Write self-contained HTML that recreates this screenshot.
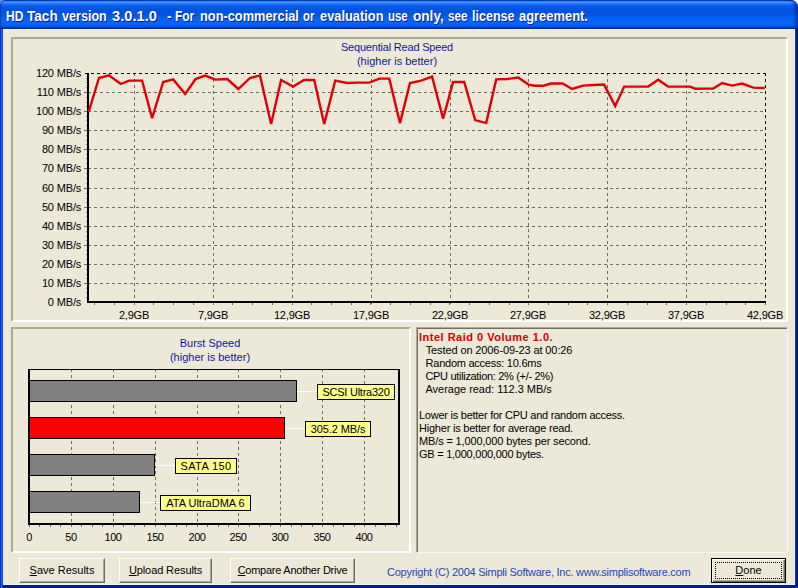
<!DOCTYPE html>
<html><head><meta charset="utf-8"><style>
*{margin:0;padding:0;box-sizing:border-box}
html,body{width:798px;height:588px;overflow:hidden;background:linear-gradient(to right,#5a8af0 50%,#f4f7fd 50%);font-family:'Liberation Sans', sans-serif}
#win{position:absolute;left:0;top:0;width:798px;height:588px;background:#081e8c;border-radius:6px 7px 0 0;overflow:hidden}
#bl{position:absolute;left:0;top:29px;width:3px;height:559px;background:linear-gradient(to right,#0030d8 0,#0030d8 1px,#2a5fe8 1px,#2a5fe8 2px,#1a48b0 2px)}
#br{position:absolute;left:795px;top:29px;width:3px;height:556px;background:linear-gradient(to right,#1a3aa8 0,#1a3aa8 1px,#001a80 1px)}
#title{position:absolute;left:0;top:0;width:798px;height:29px;border-radius:6px 7px 0 0;box-shadow:inset -3px 0 3px rgba(0,10,90,0.45),inset 1px 0 1px rgba(0,10,90,0.35);
background:linear-gradient(to bottom,#0842c2 0,#0842c2 1px,#3d90ff 1px,#3a8cff 3px,#1a6ef5 4px,#0a5ced 6px,#0053e0 9px,#0054e2 14px,#0462f4 19px,#0664f8 25px,#0450dc 27px,#0a37b0 28px,#0a2c98 29px)}
#title span{position:absolute;top:8px;font:bold 14px 'Liberation Sans', sans-serif;color:#fff;text-shadow:1px 1px 0 #0a1a8a;white-space:pre;transform-origin:0 0}
#client{position:absolute;left:3px;top:29px;width:792px;height:556px;background:#ece9d8;border-left:1px solid #dff4ff;border-top:1px solid #e8f4fe;border-right:1px solid #dff4ff;border-bottom:1px solid #eaf6ff}
.panel{position:absolute;border-top:2px solid #aca899;border-left:2px solid #aca899;border-right:2px solid #fff;border-bottom:2px solid #fff}
svg{position:absolute;left:0;top:0}
.t{font:11px 'Liberation Sans', sans-serif;fill:#000}
.tb{font:11px 'Liberation Sans', sans-serif;fill:#14149a}
.tl{font:11px 'Liberation Sans', sans-serif;fill:#000}
.btn{position:absolute;height:25px;background:#ece9d8;border:1px solid;border-color:#fff #716f64 #716f64 #fff;box-shadow:inset -1px -1px 0 #aca899;font:11px 'Liberation Sans', sans-serif;color:#000;text-align:center;line-height:23px}
.btn u{text-decoration:underline}
#memo{position:absolute;left:416px;top:327px;width:372px;height:226px;border-top:1px solid #aca899;border-left:1px solid #aca899;border-right:1px solid #f8f8f0;border-bottom:1px solid #f8f8f0;box-shadow:inset 1px 1px 0 #716f64}
#memo div{position:absolute;left:3px;font:11px 'Liberation Sans', sans-serif;color:#000;white-space:pre;letter-spacing:-0.25px}
</style></head><body><div id="win">
<div id="title"><span style="left:6.04px;transform:scaleX(0.8579)">HD</span><span style="left:26.90px;transform:scaleX(0.9710)">Tach</span><span style="left:62.30px;transform:scaleX(0.9000)">version</span><span style="left:112.00px;transform:scaleX(1.0488)">3.0.1.0</span><span style="left:166.90px;transform:scaleX(0.9500)">-</span><span style="left:174.85px;transform:scaleX(0.8545)">For</span><span style="left:199.79px;transform:scaleX(0.9142)">non-commercial</span><span style="left:302.60px;transform:scaleX(0.8071)">or</span><span style="left:319.90px;transform:scaleX(0.9174)">evaluation</span><span style="left:387.98px;transform:scaleX(0.8174)">use</span><span style="left:412.60px;transform:scaleX(0.9710)">only,</span><span style="left:447.80px;transform:scaleX(0.8348)">see</span><span style="left:471.90px;transform:scaleX(0.8957)">license</span><span style="left:518.70px;transform:scaleX(0.9230)">agreement.</span></div>
<div id="bl"></div><div id="br"></div><div id="client"></div>
<div class="panel" style="left:11px;top:37px;width:777px;height:285px"></div>
<div class="panel" style="left:11px;top:327px;width:400px;height:226px"></div>
<div id="memo">
<div style="top:3px;left:2px;color:#d40000;font-weight:bold;letter-spacing:0.5px">Intel Raid 0 Volume 1.0.</div>
<div style="top:16px;letter-spacing:-0.11px">  Tested on 2006-09-23 at 00:26</div>
<div style="top:29px">  Random access: 10.6ms</div>
<div style="top:42px;letter-spacing:-0.32px">  CPU utilization: 2% (+/- 2%)</div>
<div style="top:55px;letter-spacing:-0.02px">  Average read: 112.3 MB/s</div>
<div style="left:2px;top:81px">Lower is better for CPU and random access.</div>
<div style="left:2px;top:94px;letter-spacing:-0.22px">Higher is better for average read.</div>
<div style="left:2px;top:107px;letter-spacing:-0.14px">MB/s = 1,000,000 bytes per second.</div>
<div style="left:2px;top:120px">GB = 1,000,000,000 bytes.</div>
</div>
<svg width="798" height="588" viewBox="0 0 798 588">
<rect x="86" y="78" width="1" height="1" fill="#8a8878"/>
<rect x="86" y="82" width="1" height="1" fill="#8a8878"/>
<rect x="86" y="87" width="1" height="1" fill="#8a8878"/>
<line x1="84" y1="92.5" x2="88" y2="92.5" stroke="#6b6b5e" stroke-width="1"/>
<line x1="88" y1="92.5" x2="765" y2="92.5" stroke="#6b6b5e" stroke-width="1" stroke-dasharray="3,3"/>
<rect x="86" y="97" width="1" height="1" fill="#8a8878"/>
<rect x="86" y="102" width="1" height="1" fill="#8a8878"/>
<rect x="86" y="106" width="1" height="1" fill="#8a8878"/>
<line x1="84" y1="111.5" x2="88" y2="111.5" stroke="#6b6b5e" stroke-width="1"/>
<line x1="88" y1="111.5" x2="765" y2="111.5" stroke="#6b6b5e" stroke-width="1" stroke-dasharray="3,3"/>
<rect x="86" y="116" width="1" height="1" fill="#8a8878"/>
<rect x="86" y="120" width="1" height="1" fill="#8a8878"/>
<rect x="86" y="125" width="1" height="1" fill="#8a8878"/>
<line x1="84" y1="130.5" x2="88" y2="130.5" stroke="#6b6b5e" stroke-width="1"/>
<line x1="88" y1="130.5" x2="765" y2="130.5" stroke="#6b6b5e" stroke-width="1" stroke-dasharray="3,3"/>
<rect x="86" y="135" width="1" height="1" fill="#8a8878"/>
<rect x="86" y="140" width="1" height="1" fill="#8a8878"/>
<rect x="86" y="144" width="1" height="1" fill="#8a8878"/>
<line x1="84" y1="149.5" x2="88" y2="149.5" stroke="#6b6b5e" stroke-width="1"/>
<line x1="88" y1="149.5" x2="765" y2="149.5" stroke="#6b6b5e" stroke-width="1" stroke-dasharray="3,3"/>
<rect x="86" y="154" width="1" height="1" fill="#8a8878"/>
<rect x="86" y="158" width="1" height="1" fill="#8a8878"/>
<rect x="86" y="163" width="1" height="1" fill="#8a8878"/>
<line x1="84" y1="168.5" x2="88" y2="168.5" stroke="#6b6b5e" stroke-width="1"/>
<line x1="88" y1="168.5" x2="765" y2="168.5" stroke="#6b6b5e" stroke-width="1" stroke-dasharray="3,3"/>
<rect x="86" y="173" width="1" height="1" fill="#8a8878"/>
<rect x="86" y="178" width="1" height="1" fill="#8a8878"/>
<rect x="86" y="183" width="1" height="1" fill="#8a8878"/>
<line x1="84" y1="188.5" x2="88" y2="188.5" stroke="#6b6b5e" stroke-width="1"/>
<line x1="88" y1="188.5" x2="765" y2="188.5" stroke="#6b6b5e" stroke-width="1" stroke-dasharray="3,3"/>
<rect x="86" y="193" width="1" height="1" fill="#8a8878"/>
<rect x="86" y="198" width="1" height="1" fill="#8a8878"/>
<rect x="86" y="202" width="1" height="1" fill="#8a8878"/>
<line x1="84" y1="207.5" x2="88" y2="207.5" stroke="#6b6b5e" stroke-width="1"/>
<line x1="88" y1="207.5" x2="765" y2="207.5" stroke="#6b6b5e" stroke-width="1" stroke-dasharray="3,3"/>
<rect x="86" y="212" width="1" height="1" fill="#8a8878"/>
<rect x="86" y="216" width="1" height="1" fill="#8a8878"/>
<rect x="86" y="221" width="1" height="1" fill="#8a8878"/>
<line x1="84" y1="226.5" x2="88" y2="226.5" stroke="#6b6b5e" stroke-width="1"/>
<line x1="88" y1="226.5" x2="765" y2="226.5" stroke="#6b6b5e" stroke-width="1" stroke-dasharray="3,3"/>
<rect x="86" y="231" width="1" height="1" fill="#8a8878"/>
<rect x="86" y="236" width="1" height="1" fill="#8a8878"/>
<rect x="86" y="240" width="1" height="1" fill="#8a8878"/>
<line x1="84" y1="245.5" x2="88" y2="245.5" stroke="#6b6b5e" stroke-width="1"/>
<line x1="88" y1="245.5" x2="765" y2="245.5" stroke="#6b6b5e" stroke-width="1" stroke-dasharray="3,3"/>
<rect x="86" y="250" width="1" height="1" fill="#8a8878"/>
<rect x="86" y="254" width="1" height="1" fill="#8a8878"/>
<rect x="86" y="259" width="1" height="1" fill="#8a8878"/>
<line x1="84" y1="264.5" x2="88" y2="264.5" stroke="#6b6b5e" stroke-width="1"/>
<line x1="88" y1="264.5" x2="765" y2="264.5" stroke="#6b6b5e" stroke-width="1" stroke-dasharray="3,3"/>
<rect x="86" y="269" width="1" height="1" fill="#8a8878"/>
<rect x="86" y="274" width="1" height="1" fill="#8a8878"/>
<rect x="86" y="278" width="1" height="1" fill="#8a8878"/>
<line x1="84" y1="283.5" x2="88" y2="283.5" stroke="#6b6b5e" stroke-width="1"/>
<line x1="88" y1="283.5" x2="765" y2="283.5" stroke="#6b6b5e" stroke-width="1" stroke-dasharray="3,3"/>
<rect x="86" y="288" width="1" height="1" fill="#8a8878"/>
<rect x="86" y="292" width="1" height="1" fill="#8a8878"/>
<rect x="86" y="297" width="1" height="1" fill="#8a8878"/>
<text x="81.2" y="77" text-anchor="end" class="t" letter-spacing="-0.15">120 MB/s</text>
<text x="81.2" y="96" text-anchor="end" class="t" letter-spacing="-0.15">110 MB/s</text>
<text x="81.2" y="115" text-anchor="end" class="t" letter-spacing="-0.15">100 MB/s</text>
<text x="81.2" y="134" text-anchor="end" class="t" letter-spacing="-0.15">90 MB/s</text>
<text x="81.2" y="153" text-anchor="end" class="t" letter-spacing="-0.15">80 MB/s</text>
<text x="81.2" y="172" text-anchor="end" class="t" letter-spacing="-0.15">70 MB/s</text>
<text x="81.2" y="192" text-anchor="end" class="t" letter-spacing="-0.15">60 MB/s</text>
<text x="81.2" y="211" text-anchor="end" class="t" letter-spacing="-0.15">50 MB/s</text>
<text x="81.2" y="230" text-anchor="end" class="t" letter-spacing="-0.15">40 MB/s</text>
<text x="81.2" y="249" text-anchor="end" class="t" letter-spacing="-0.15">30 MB/s</text>
<text x="81.2" y="268" text-anchor="end" class="t" letter-spacing="-0.15">20 MB/s</text>
<text x="81.2" y="287" text-anchor="end" class="t" letter-spacing="-0.15">10 MB/s</text>
<text x="81.2" y="306" text-anchor="end" class="t" letter-spacing="-0.15">0 MB/s</text>
<line x1="134.5" y1="73" x2="134.5" y2="305" stroke="#6b6b5e" stroke-width="1" stroke-dasharray="3,3"/>
<text x="134" y="319" text-anchor="middle" class="t" letter-spacing="-0.2">2,9GB</text>
<line x1="213.5" y1="73" x2="213.5" y2="305" stroke="#6b6b5e" stroke-width="1" stroke-dasharray="3,3"/>
<text x="213" y="319" text-anchor="middle" class="t" letter-spacing="-0.2">7,9GB</text>
<line x1="292.5" y1="73" x2="292.5" y2="305" stroke="#6b6b5e" stroke-width="1" stroke-dasharray="3,3"/>
<text x="292" y="319" text-anchor="middle" class="t" letter-spacing="-0.2">12,9GB</text>
<line x1="371.5" y1="73" x2="371.5" y2="305" stroke="#6b6b5e" stroke-width="1" stroke-dasharray="3,3"/>
<text x="371" y="319" text-anchor="middle" class="t" letter-spacing="-0.2">17,9GB</text>
<line x1="450.5" y1="73" x2="450.5" y2="305" stroke="#6b6b5e" stroke-width="1" stroke-dasharray="3,3"/>
<text x="450" y="319" text-anchor="middle" class="t" letter-spacing="-0.2">22,9GB</text>
<line x1="528.5" y1="73" x2="528.5" y2="305" stroke="#6b6b5e" stroke-width="1" stroke-dasharray="3,3"/>
<text x="528" y="319" text-anchor="middle" class="t" letter-spacing="-0.2">27,9GB</text>
<line x1="607.5" y1="73" x2="607.5" y2="305" stroke="#6b6b5e" stroke-width="1" stroke-dasharray="3,3"/>
<text x="607" y="319" text-anchor="middle" class="t" letter-spacing="-0.2">32,9GB</text>
<line x1="686.5" y1="73" x2="686.5" y2="305" stroke="#6b6b5e" stroke-width="1" stroke-dasharray="3,3"/>
<text x="686" y="319" text-anchor="middle" class="t" letter-spacing="-0.2">37,9GB</text>
<text x="765" y="319" text-anchor="middle" class="t" letter-spacing="-0.2">42,9GB</text>
<line x1="94.5" y1="301" x2="94.5" y2="305" stroke="#6b6b5e" stroke-width="1"/>
<line x1="114.5" y1="301" x2="114.5" y2="305" stroke="#6b6b5e" stroke-width="1"/>
<line x1="134.5" y1="301" x2="134.5" y2="305" stroke="#6b6b5e" stroke-width="1"/>
<line x1="153.5" y1="301" x2="153.5" y2="305" stroke="#6b6b5e" stroke-width="1"/>
<line x1="173.5" y1="301" x2="173.5" y2="305" stroke="#6b6b5e" stroke-width="1"/>
<line x1="193.5" y1="301" x2="193.5" y2="305" stroke="#6b6b5e" stroke-width="1"/>
<line x1="213.5" y1="301" x2="213.5" y2="305" stroke="#6b6b5e" stroke-width="1"/>
<line x1="232.5" y1="301" x2="232.5" y2="305" stroke="#6b6b5e" stroke-width="1"/>
<line x1="252.5" y1="301" x2="252.5" y2="305" stroke="#6b6b5e" stroke-width="1"/>
<line x1="272.5" y1="301" x2="272.5" y2="305" stroke="#6b6b5e" stroke-width="1"/>
<line x1="292.5" y1="301" x2="292.5" y2="305" stroke="#6b6b5e" stroke-width="1"/>
<line x1="311.5" y1="301" x2="311.5" y2="305" stroke="#6b6b5e" stroke-width="1"/>
<line x1="331.5" y1="301" x2="331.5" y2="305" stroke="#6b6b5e" stroke-width="1"/>
<line x1="351.5" y1="301" x2="351.5" y2="305" stroke="#6b6b5e" stroke-width="1"/>
<line x1="370.5" y1="301" x2="370.5" y2="305" stroke="#6b6b5e" stroke-width="1"/>
<line x1="390.5" y1="301" x2="390.5" y2="305" stroke="#6b6b5e" stroke-width="1"/>
<line x1="410.5" y1="301" x2="410.5" y2="305" stroke="#6b6b5e" stroke-width="1"/>
<line x1="430.5" y1="301" x2="430.5" y2="305" stroke="#6b6b5e" stroke-width="1"/>
<line x1="449.5" y1="301" x2="449.5" y2="305" stroke="#6b6b5e" stroke-width="1"/>
<line x1="469.5" y1="301" x2="469.5" y2="305" stroke="#6b6b5e" stroke-width="1"/>
<line x1="489.5" y1="301" x2="489.5" y2="305" stroke="#6b6b5e" stroke-width="1"/>
<line x1="509.5" y1="301" x2="509.5" y2="305" stroke="#6b6b5e" stroke-width="1"/>
<line x1="528.5" y1="301" x2="528.5" y2="305" stroke="#6b6b5e" stroke-width="1"/>
<line x1="548.5" y1="301" x2="548.5" y2="305" stroke="#6b6b5e" stroke-width="1"/>
<line x1="568.5" y1="301" x2="568.5" y2="305" stroke="#6b6b5e" stroke-width="1"/>
<line x1="587.5" y1="301" x2="587.5" y2="305" stroke="#6b6b5e" stroke-width="1"/>
<line x1="607.5" y1="301" x2="607.5" y2="305" stroke="#6b6b5e" stroke-width="1"/>
<line x1="627.5" y1="301" x2="627.5" y2="305" stroke="#6b6b5e" stroke-width="1"/>
<line x1="647.5" y1="301" x2="647.5" y2="305" stroke="#6b6b5e" stroke-width="1"/>
<line x1="666.5" y1="301" x2="666.5" y2="305" stroke="#6b6b5e" stroke-width="1"/>
<line x1="686.5" y1="301" x2="686.5" y2="305" stroke="#6b6b5e" stroke-width="1"/>
<line x1="706.5" y1="301" x2="706.5" y2="305" stroke="#6b6b5e" stroke-width="1"/>
<line x1="726.5" y1="301" x2="726.5" y2="305" stroke="#6b6b5e" stroke-width="1"/>
<line x1="745.5" y1="301" x2="745.5" y2="305" stroke="#6b6b5e" stroke-width="1"/>
<line x1="765.5" y1="301" x2="765.5" y2="305" stroke="#6b6b5e" stroke-width="1"/>
<line x1="85" y1="73.5" x2="766" y2="73.5" stroke="#000" stroke-width="1" stroke-dasharray="3,3"/>
<line x1="765.5" y1="73" x2="765.5" y2="301" stroke="#000" stroke-width="1" stroke-dasharray="3,3"/>
<rect x="87" y="73" width="2" height="230" fill="#000"/>
<rect x="87" y="301" width="679" height="2" fill="#000"/>
<polyline points="88.6,112.1 99,78 109,75.4 120.7,84 129.1,80.6 142.1,80.6 152.1,118.1 163.2,82 173.2,79.4 185.2,94 195.6,79 205.2,75.6 215.3,79.6 227.3,79 238.3,89 250,78 260,75.4 271.1,124.1 281.1,80 293.1,86.6 304.1,80 314.2,80 324.2,124.1 335.2,80.6 347.2,83 357.2,82.6 369.3,82.6 379.3,78.6 389.3,78.6 400,123.1 410,83 421.1,80.6 432.1,76.6 443.1,118.7 453.1,82 464.2,82 475.2,120.1 486.2,123.1 496.2,79.4 507.2,79 518.3,77.6 528.8,84.8 535,85.7 543.8,85.7 550.7,83.5 562.6,83.5 572.1,89 583.1,85.6 594.1,85 604.1,84.6 615.2,106.1 624.2,86.6 635.2,86.6 648.2,86.6 658.2,79.8 668,86.6 678,86.6 690.2,86.6 695.2,88.7 705.1,88.6 713.2,88.6 722.2,83 732.2,85.6 742.2,83.6 753.2,87.6 764.7,88" fill="none" stroke="#e0000a" stroke-width="2.4" stroke-linejoin="miter" stroke-miterlimit="3"/>
<text x="397" y="51" text-anchor="middle" class="tb" letter-spacing="-0.2">Sequential Read Speed</text>
<text x="397" y="65" text-anchor="middle" class="tb">(higher is better)</text>
<line x1="71.5" y1="369" x2="71.5" y2="523" stroke="#6b6b5e" stroke-width="1" stroke-dasharray="3,3"/>
<line x1="113.5" y1="369" x2="113.5" y2="523" stroke="#6b6b5e" stroke-width="1" stroke-dasharray="3,3"/>
<line x1="155.5" y1="369" x2="155.5" y2="523" stroke="#6b6b5e" stroke-width="1" stroke-dasharray="3,3"/>
<line x1="197.5" y1="369" x2="197.5" y2="523" stroke="#6b6b5e" stroke-width="1" stroke-dasharray="3,3"/>
<line x1="238.5" y1="369" x2="238.5" y2="523" stroke="#6b6b5e" stroke-width="1" stroke-dasharray="3,3"/>
<line x1="280.5" y1="369" x2="280.5" y2="523" stroke="#6b6b5e" stroke-width="1" stroke-dasharray="3,3"/>
<line x1="322.5" y1="369" x2="322.5" y2="523" stroke="#6b6b5e" stroke-width="1" stroke-dasharray="3,3"/>
<line x1="364.5" y1="369" x2="364.5" y2="523" stroke="#6b6b5e" stroke-width="1" stroke-dasharray="3,3"/>
<text x="29" y="541" text-anchor="middle" class="t" letter-spacing="-0.4">0</text>
<text x="71" y="541" text-anchor="middle" class="t" letter-spacing="-0.4">50</text>
<text x="113" y="541" text-anchor="middle" class="t" letter-spacing="-0.4">100</text>
<text x="155" y="541" text-anchor="middle" class="t" letter-spacing="-0.4">150</text>
<text x="197" y="541" text-anchor="middle" class="t" letter-spacing="-0.4">200</text>
<text x="238" y="541" text-anchor="middle" class="t" letter-spacing="-0.4">250</text>
<text x="280" y="541" text-anchor="middle" class="t" letter-spacing="-0.4">300</text>
<text x="322" y="541" text-anchor="middle" class="t" letter-spacing="-0.4">350</text>
<text x="364" y="541" text-anchor="middle" class="t" letter-spacing="-0.4">400</text>
<line x1="29.5" y1="523" x2="29.5" y2="527" stroke="#6b6b5e" stroke-width="1"/>
<line x1="39.5" y1="523" x2="39.5" y2="527" stroke="#6b6b5e" stroke-width="1"/>
<line x1="50.5" y1="523" x2="50.5" y2="527" stroke="#6b6b5e" stroke-width="1"/>
<line x1="60.5" y1="523" x2="60.5" y2="527" stroke="#6b6b5e" stroke-width="1"/>
<line x1="71.5" y1="523" x2="71.5" y2="527" stroke="#6b6b5e" stroke-width="1"/>
<line x1="81.5" y1="523" x2="81.5" y2="527" stroke="#6b6b5e" stroke-width="1"/>
<line x1="92.5" y1="523" x2="92.5" y2="527" stroke="#6b6b5e" stroke-width="1"/>
<line x1="102.5" y1="523" x2="102.5" y2="527" stroke="#6b6b5e" stroke-width="1"/>
<line x1="113.5" y1="523" x2="113.5" y2="527" stroke="#6b6b5e" stroke-width="1"/>
<line x1="123.5" y1="523" x2="123.5" y2="527" stroke="#6b6b5e" stroke-width="1"/>
<line x1="134.5" y1="523" x2="134.5" y2="527" stroke="#6b6b5e" stroke-width="1"/>
<line x1="144.5" y1="523" x2="144.5" y2="527" stroke="#6b6b5e" stroke-width="1"/>
<line x1="155.5" y1="523" x2="155.5" y2="527" stroke="#6b6b5e" stroke-width="1"/>
<line x1="165.5" y1="523" x2="165.5" y2="527" stroke="#6b6b5e" stroke-width="1"/>
<line x1="176.5" y1="523" x2="176.5" y2="527" stroke="#6b6b5e" stroke-width="1"/>
<line x1="186.5" y1="523" x2="186.5" y2="527" stroke="#6b6b5e" stroke-width="1"/>
<line x1="197.5" y1="523" x2="197.5" y2="527" stroke="#6b6b5e" stroke-width="1"/>
<line x1="207.5" y1="523" x2="207.5" y2="527" stroke="#6b6b5e" stroke-width="1"/>
<line x1="218.5" y1="523" x2="218.5" y2="527" stroke="#6b6b5e" stroke-width="1"/>
<line x1="228.5" y1="523" x2="228.5" y2="527" stroke="#6b6b5e" stroke-width="1"/>
<line x1="238.5" y1="523" x2="238.5" y2="527" stroke="#6b6b5e" stroke-width="1"/>
<line x1="249.5" y1="523" x2="249.5" y2="527" stroke="#6b6b5e" stroke-width="1"/>
<line x1="259.5" y1="523" x2="259.5" y2="527" stroke="#6b6b5e" stroke-width="1"/>
<line x1="270.5" y1="523" x2="270.5" y2="527" stroke="#6b6b5e" stroke-width="1"/>
<line x1="280.5" y1="523" x2="280.5" y2="527" stroke="#6b6b5e" stroke-width="1"/>
<line x1="291.5" y1="523" x2="291.5" y2="527" stroke="#6b6b5e" stroke-width="1"/>
<line x1="301.5" y1="523" x2="301.5" y2="527" stroke="#6b6b5e" stroke-width="1"/>
<line x1="312.5" y1="523" x2="312.5" y2="527" stroke="#6b6b5e" stroke-width="1"/>
<line x1="322.5" y1="523" x2="322.5" y2="527" stroke="#6b6b5e" stroke-width="1"/>
<line x1="333.5" y1="523" x2="333.5" y2="527" stroke="#6b6b5e" stroke-width="1"/>
<line x1="343.5" y1="523" x2="343.5" y2="527" stroke="#6b6b5e" stroke-width="1"/>
<line x1="354.5" y1="523" x2="354.5" y2="527" stroke="#6b6b5e" stroke-width="1"/>
<line x1="364.5" y1="523" x2="364.5" y2="527" stroke="#6b6b5e" stroke-width="1"/>
<line x1="375.5" y1="523" x2="375.5" y2="527" stroke="#6b6b5e" stroke-width="1"/>
<line x1="385.5" y1="523" x2="385.5" y2="527" stroke="#6b6b5e" stroke-width="1"/>
<line x1="396.5" y1="523" x2="396.5" y2="527" stroke="#6b6b5e" stroke-width="1"/>
<rect x="28" y="369" width="372" height="1" fill="#000"/>
<rect x="28" y="369" width="2" height="156" fill="#000"/>
<rect x="28" y="523" width="372" height="2" fill="#000"/>
<rect x="398" y="369" width="2" height="156" fill="#000"/>
<rect x="29.5" y="380.5" width="267" height="21" fill="#808080" stroke="#000" stroke-width="1"/>
<line x1="297" y1="391.5" x2="317" y2="391.5" stroke="#fff" stroke-width="1"/>
<rect x="317.5" y="384.5" width="77" height="15" fill="#ffff8c" stroke="#000" stroke-width="1"/>
<text x="356.0" y="396" text-anchor="middle" class="tl" letter-spacing="-0.25">SCSI Ultra320</text>
<rect x="29.5" y="417.5" width="255" height="21" fill="#ff0000" stroke="#000" stroke-width="1"/>
<line x1="285" y1="428.5" x2="305" y2="428.5" stroke="#fff" stroke-width="1"/>
<rect x="305.5" y="421.5" width="65" height="15" fill="#ffff8c" stroke="#000" stroke-width="1"/>
<text x="338.0" y="433" text-anchor="middle" class="tl" letter-spacing="-0.1">305.2 MB/s</text>
<rect x="29.5" y="454.5" width="125" height="21" fill="#808080" stroke="#000" stroke-width="1"/>
<line x1="155" y1="465.5" x2="175" y2="465.5" stroke="#fff" stroke-width="1"/>
<rect x="175.5" y="458.5" width="61" height="15" fill="#ffff8c" stroke="#000" stroke-width="1"/>
<text x="206.0" y="470" text-anchor="middle" class="tl" letter-spacing="0.4">SATA 150</text>
<rect x="29.5" y="491.5" width="110" height="21" fill="#808080" stroke="#000" stroke-width="1"/>
<line x1="140" y1="502.5" x2="160" y2="502.5" stroke="#fff" stroke-width="1"/>
<rect x="160.5" y="495.5" width="90" height="15" fill="#ffff8c" stroke="#000" stroke-width="1"/>
<text x="205.5" y="507" text-anchor="middle" class="tl" letter-spacing="0">ATA UltraDMA 6</text>
<text x="210" y="347" text-anchor="middle" class="tb">Burst Speed</text>
<text x="210" y="361" text-anchor="middle" class="tb">(higher is better)</text>
</svg>
<div class="btn" style="left:19px;top:558px;width:86px"><u>S</u>ave Results</div>
<div class="btn" style="left:119px;top:558px;width:93px;letter-spacing:-0.1px"><u>U</u>pload Results</div>
<div class="btn" style="left:230px;top:558px;width:125px;letter-spacing:-0.25px"><u>C</u>ompare Another Drive</div>
<div style="position:absolute;left:387px;top:566px;font:11px 'Liberation Sans', sans-serif;color:#1e46b4;white-space:pre;letter-spacing:-0.25px">Copyright (C) 2004 Simpli Software, Inc. www.simplisoftware.com</div>
<div class="btn" style="left:711px;top:558px;width:75px;border:1px solid #000;box-shadow:inset 1px 1px 0 #fff,inset -1px -1px 0 #716f64,inset -2px -2px 0 #aca899"><span style="position:absolute;left:3px;top:3px;right:3px;bottom:3px;border:1px dotted #000"></span><u>D</u>one</div>
</div></body></html>
